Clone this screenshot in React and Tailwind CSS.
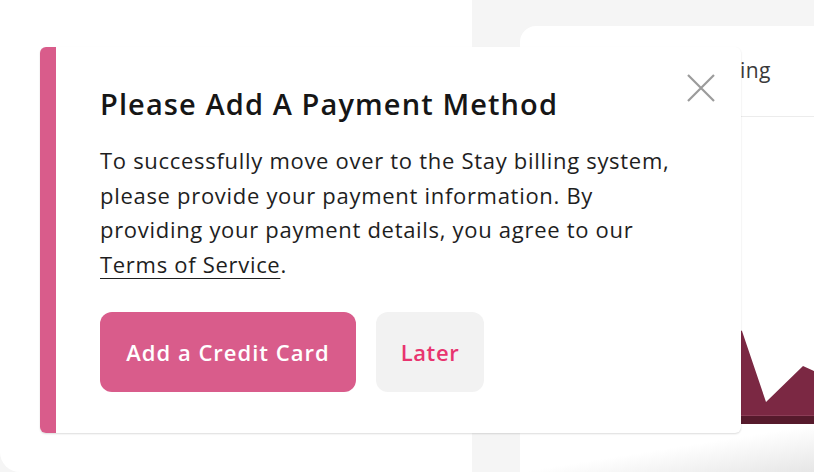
import React from "react";

export default function App() {
  return (
    <div
      className="relative w-[814px] h-[472px] overflow-hidden bg-[#f5f5f5]"
      style={{ fontFamily: "'Open Sans', 'Noto Sans', sans-serif" }}
    >
      <div className="flex h-full">
        {/* left panel */}
        <div className="w-[472px] h-full bg-white rounded-bl-[20px]" />
        {/* right card */}
        <div className="ml-[48px] mt-[26px] flex-1 flex flex-col bg-white rounded-tl-[16px]">
          <div className="h-[91px] border-b border-[#ececec] flex items-center justify-end pr-[43px] shrink-0">
            <span className="text-[21px] text-[#3a3a3a] tracking-[0.5px]">Billing</span>
          </div>
          <svg width="294" height="308" viewBox="0 0 294 308" className="block shrink-0">
            <polygon
              points="0,260 60,230 120,250 180,190 222,214 246,285 283,249 294,254 294,298 0,298"
              fill="#7b2843"
            />
            <rect x="0" y="298" width="294" height="1" fill="#8c3d57" />
            <rect x="0" y="299" width="294" height="8" fill="#561a2c" />
          </svg>
          <div className="flex-1 bg-gradient-to-br from-white via-white to-[#e6e6e6]" />
        </div>
      </div>

      {/* popup */}
      <div className="absolute left-[40px] top-[47px] w-[701px] h-[386px] flex bg-white rounded-[6px] shadow-[0_1px_2px_rgba(0,0,0,0.14)] overflow-hidden">
        <div className="w-[16px] bg-[#d95c8b] shrink-0" />
        <div className="relative flex-1 pl-[44px] pt-[40px]">
          <button className="absolute right-[26px] top-[27px] w-[28px] h-[28px] flex items-center justify-center">
            <svg width="28" height="28" viewBox="0 0 28 28">
              <path d="M1 1 L27 27 M27 1 L1 27" stroke="#9b9b9b" strokeWidth="2.2" />
            </svg>
          </button>
          <h1 className="text-[29px] leading-[34px] font-semibold text-[#161616] tracking-[1.1px]">
            Please Add A Payment Method
          </h1>
          <p className="mt-[22px] text-[22px] leading-[34.5px] text-[#1e1e1e] tracking-[0.7px]">
            To successfully move over to the Stay billing system,
            <br />
            please provide your payment information. By
            <br />
            providing your payment details, you agree to our
            <br />
            <span className="underline underline-offset-[5px] decoration-[1px]">Terms of Service</span>.
          </p>
          <div className="mt-[31px] flex gap-[20px]">
            <button className="w-[256px] h-[80px] rounded-[12px] bg-[#d95c8b] text-white text-[22px] font-semibold tracking-[1px]">
              Add a Credit Card
            </button>
            <button className="w-[108px] h-[80px] rounded-[12px] bg-[#f2f2f2] text-[#e8346f] text-[22px] font-semibold tracking-[0.6px]">
              Later
            </button>
          </div>
        </div>
      </div>
    </div>
  );
}
